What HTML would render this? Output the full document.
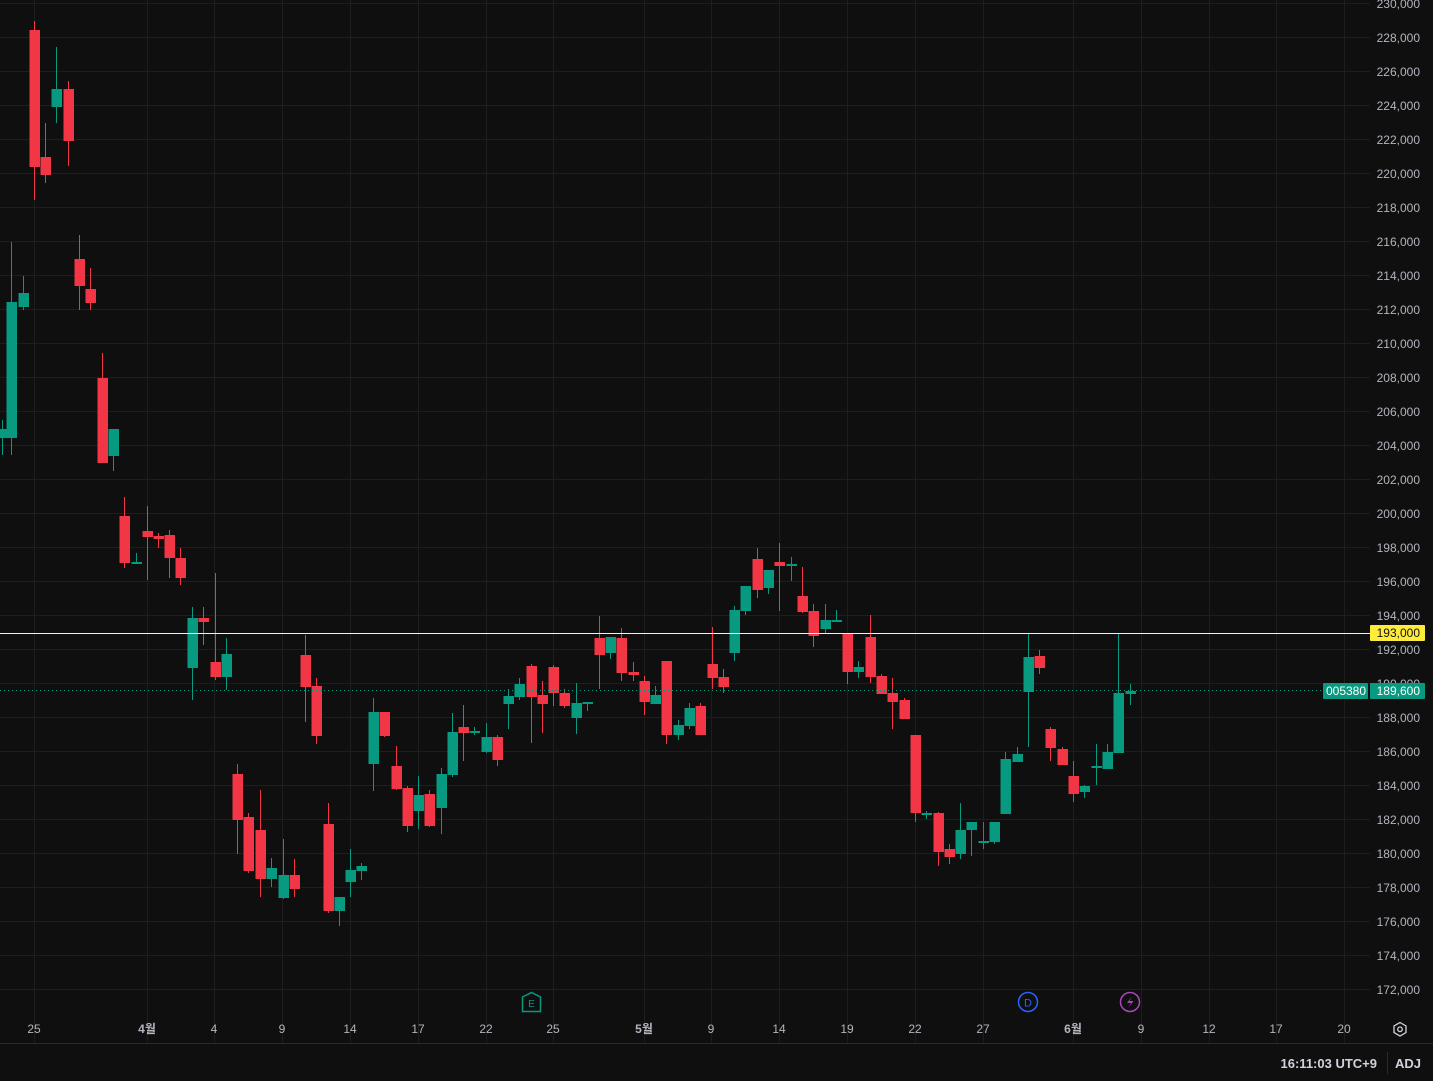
<!DOCTYPE html>
<html><head><meta charset="utf-8">
<style>
html,body{margin:0;padding:0;background:#0f0f0f;width:1433px;height:1081px;overflow:hidden}
svg{display:block}
text{font-family:"Liberation Sans","Noto Sans CJK KR",sans-serif}
</style></head>
<body>
<svg id="c" width="1433" height="1081" xmlns="http://www.w3.org/2000/svg">
<rect width="1433" height="1081" fill="#0f0f0f"/>
<g id="grid"></g>
<g id="candles"></g>
<line x1="0" y1="633.5" x2="1370" y2="633.5" stroke="#fff6b0" stroke-width="1"/>
<line x1="0" y1="690.5" x2="1322" y2="690.5" stroke="#089981" stroke-width="1" stroke-dasharray="1,3"/>
<g id="axis"></g>
<rect x="1370" y="625" width="55" height="16" rx="1" fill="#ffeb3b"/>
<text x="1420" y="637" font-size="12" fill="#131313" text-anchor="end">193,000</text>
<rect x="1323" y="683" width="45" height="16" rx="1" fill="#089981"/>
<text x="1346" y="695" font-size="12" fill="#fff" text-anchor="middle">005380</text>
<rect x="1370" y="683" width="55" height="16" rx="1" fill="#089981"/>
<text x="1420" y="695" font-size="12" fill="#fff" text-anchor="end">189,600</text>
<path d="M522.5 997 L531.5 992.5 L540.5 997 L540.5 1011.5 L522.5 1011.5 Z" fill="none" stroke="#089981" stroke-width="1.5"/>
<text x="531.5" y="1007" font-size="10" fill="#089981" text-anchor="middle">E</text>
<circle cx="1028" cy="1002" r="9.5" fill="none" stroke="#2962ff" stroke-width="1.5"/>
<text x="1028" y="1006.5" font-size="11" fill="#2962ff" text-anchor="middle">D</text>
<circle cx="1130" cy="1002" r="9.5" fill="none" stroke="#ab47bc" stroke-width="1.5"/>
<path d="M1132 996.5 L1127 1003 L1131 1003 L1128 1008 L1133.5 1001 L1129.5 1001 Z" fill="#ab47bc"/>
<g id="xaxis"></g>
<path d="M1400 1022.5 L1406 1026 L1406 1032.5 L1400 1036 L1394 1032.5 L1394 1026 Z" fill="none" stroke="#d1d4dc" stroke-width="1.3"/>
<circle cx="1400" cy="1029.3" r="2.3" fill="none" stroke="#d1d4dc" stroke-width="1.3"/>
<line x1="0" y1="1043.5" x2="1433" y2="1043.5" stroke="#2a2a2a"/>
<text x="1377" y="1068" font-size="13" fill="#d1d4dc" text-anchor="end" font-weight="bold">16:11:03 UTC+9</text>
<line x1="1387.5" y1="1052" x2="1387.5" y2="1074" stroke="#2a2a2a"/>
<text x="1421" y="1068" font-size="13" fill="#d1d4dc" text-anchor="end" font-weight="bold">ADJ</text>
</svg>
<script>
var NS="http://www.w3.org/2000/svg";
function el(p,t,a,txt){var e=document.createElementNS(NS,t);for(var k in a)e.setAttribute(k,a[k]);if(txt!==undefined)e.textContent=txt;document.getElementById(p).appendChild(e);}
var vx=[34,147,214,282,350,418,486,553,644,711,779,847,915,983,1073,1141,1209,1276,1344];
vx.forEach(function(x){el("grid","line",{x1:x+.5,y1:0,x2:x+.5,y2:1043,stroke:"#1e1e1e"});});
for(var p=230;p>=172;p-=2){var y=3+(230-p)*17;el("grid","line",{x1:0,y1:y+.5,x2:1370,y2:y+.5,stroke:"#1e1e1e"});
 if(p!=190)el("axis","text",{x:1420,y:y+5,"font-size":12,fill:"#b2b5be","text-anchor":"end"},p+",000");}
el("axis","text",{x:1420,y:3+40*17+5,"font-size":12,fill:"#b2b5be","text-anchor":"end"},"190,000");
var xl=[[34,"25"],[147,"4월",1],[214,"4"],[282,"9"],[350,"14"],[418,"17"],[486,"22"],[553,"25"],[644,"5월",1],[711,"9"],[779,"14"],[847,"19"],[915,"22"],[983,"27"],[1073,"6월",1],[1141,"9"],[1209,"12"],[1276,"17"],[1344,"20"]];
xl.forEach(function(a){el("xaxis","text",{x:a[0],y:1033,"font-size":12,fill:"#b2b5be","text-anchor":"middle","font-weight":a[2]?"bold":"normal"},a[1]);});
var C=[[2,"g",429,438,420,455],[11,"g",302,438,242,455],[23,"g",293,307,276,310],[34,"r",30,167,21,200],[45,"r",157,175,123,183],[56,"g",89,107,47,123],[68,"r",89,141,81,166],[79,"r",259,286,235,310],[90,"r",289,303,268,310],[102,"r",378,463,353,463],[113,"g",429,456,429,471],[124,"r",516,563,497,568],[136,"g",562,564,553,564],[147,"r",531,537,506,580],[158,"r",536,539,533,548],[169,"r",535,558,530,578],[180,"r",558,578,548,585],[192,"g",618,668,607,700],[203,"r",618,622,607,645],[215,"r",662,677,573,680],[226,"g",654,677,638,690],[237,"r",774,820,764,854],[248,"r",817,871,813,873],[260,"r",830,879,790,897],[271,"g",868,879,858,887],[283,"g",875,898,839,899],[294,"r",875,889,859,897],[305,"r",655,687,635,722],[316,"r",686,736,678,744],[328,"r",824,911,803,913],[339,"g",897,911,897,926],[350,"g",870,882,849,897],[361,"g",866,871,863,880],[373,"g",712,764,698,791],[384,"r",712,736,712,737],[396,"r",766,789,746,790],[407,"r",788,826,786,832],[418,"g",795,811,776,829],[429,"r",794,826,790,827],[441,"g",774,808,768,834],[452,"g",732,775,713,777],[463,"r",727,733,705,761],[474,"g",731,733,727,735],[486,"g",737,752,723,753],[497,"r",737,760,735,766],[508,"g",696,704,689,729],[519,"g",684,697,678,700],[531,"r",666,697,664,743],[542,"r",695,704,681,733],[553,"r",667,693,665,706],[564,"r",693,706,689,708],[576,"g",703,718,683,734],[587,"g",702,704,702,711],[599,"r",638,655,616,689],[610,"g",637,653,637,659],[621,"r",638,673,628,681],[633,"r",672,675,662,681],[644,"r",681,702,676,715],[655,"g",695,704,686,704],[666,"r",661,735,661,744],[678,"g",725,735,720,740],[689,"g",708,726,703,729],[700,"r",706,735,703,735],[712,"r",664,678,627,689],[723,"r",677,687,669,693],[734,"g",610,653,606,661],[745,"g",586,611,586,615],[757,"r",559,590,548,598],[768,"g",570,588,570,594],[779,"r",562,566,543,611],[791,"g",564,565,557,581],[802,"r",596,612,567,613],[813,"r",611,636,604,647],[825,"g",620,629,604,633],[836,"g",620,621,610,621],[847,"r",633,672,633,684],[858,"g",667,672,661,678],[870,"r",637,677,615,683],[881,"r",676,694,674,694],[892,"r",693,702,678,729],[904,"r",700,719,698,719],[915,"r",735,813,735,822],[926,"g",813,814,811,819],[938,"r",813,852,812,866],[949,"r",849,857,844,864],[960,"g",830,854,803,859],[971,"g",822,830,822,856],[983,"g",841,843,822,849],[994,"g",822,842,822,844],[1005,"g",759,814,752,814],[1017,"g",754,762,747,762],[1028,"g",657,692,633,747],[1039,"r",656,668,650,674],[1050,"r",729,748,727,761],[1062,"r",749,765,747,765],[1073,"r",776,794,761,802],[1084,"g",786,792,785,798],[1096,"g",766,768,744,785],[1107,"g",752,769,744,769],[1118,"g",693,753,633,753],[1130,"g",691,694,684,705]];
C.forEach(function(c){var col=c[1]=="g"?"#089981":"#f23645";
 el("candles","rect",{x:c[0],y:c[4],width:1,height:c[5]-c[4],fill:col});
 el("candles","rect",{x:c[0]-4.5,y:c[2],width:10.5,height:Math.max(2,c[3]-c[2]),fill:col});});
</script>
</body></html>
